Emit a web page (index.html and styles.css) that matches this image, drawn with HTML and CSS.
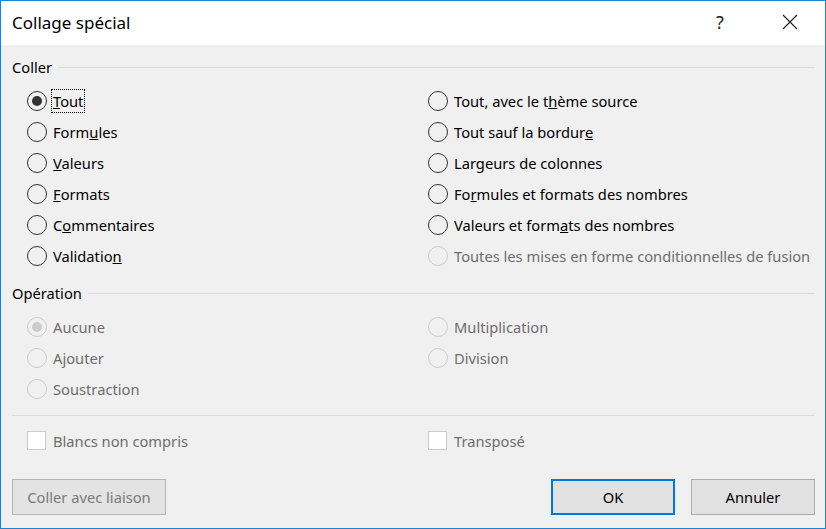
FILE: index.html
```html
<html>
<head>
    <meta charset="utf-8">
    <link rel="stylesheet" href="styles.css">
</head>
<body>
    <div class="dialog">
        <div class="titlebar">
            <span class="title">Collage spécial</span>
            <span class="help">?</span>
            <span class="close">
                <svg width="16" height="16" viewBox="0 0 16 16"><path d="M1 1L15 15M15 1L1 15" stroke="#222" stroke-width="1.2" fill="none"/></svg>
            </span>
        </div>

        <div class="content">
            <div class="group-head"><span>Coller</span><div class="rule"></div></div>
            <div class="options">
                <div class="opt"><span class="radio checked"></span><span class="label focus"><u>T</u>out</span></div>
                <div class="opt"><span class="radio"></span><span class="label">Tout, avec le t<u>h</u>ème source</span></div>
                <div class="opt"><span class="radio"></span><span class="label">Form<u>u</u>les</span></div>
                <div class="opt"><span class="radio"></span><span class="label">Tout sauf la bordur<u>e</u></span></div>
                <div class="opt"><span class="radio"></span><span class="label"><u>V</u>aleurs</span></div>
                <div class="opt"><span class="radio"></span><span class="label">Largeurs de colonnes</span></div>
                <div class="opt"><span class="radio"></span><span class="label"><u>F</u>ormats</span></div>
                <div class="opt"><span class="radio"></span><span class="label">Fo<u>r</u>mules et formats des nombres</span></div>
                <div class="opt"><span class="radio"></span><span class="label">C<u>o</u>mmentaires</span></div>
                <div class="opt"><span class="radio"></span><span class="label">Valeurs et form<u>a</u>ts des nombres</span></div>
                <div class="opt"><span class="radio"></span><span class="label">Validatio<u>n</u></span></div>
                <div class="opt disabled"><span class="radio"></span><span class="label">Toutes les mises en forme conditionnelles de fusion</span></div>
            </div>

            <div class="group-head op-head"><span>Opération</span><div class="rule"></div></div>
            <div class="options">
                <div class="opt disabled"><span class="radio checked"></span><span class="label">Aucune</span></div>
                <div class="opt disabled"><span class="radio"></span><span class="label">Multiplication</span></div>
                <div class="opt disabled"><span class="radio"></span><span class="label">Ajouter</span></div>
                <div class="opt disabled"><span class="radio"></span><span class="label">Division</span></div>
                <div class="opt disabled"><span class="radio"></span><span class="label">Soustraction</span></div>
            </div>

            <div class="separator"></div>

            <div class="options checks">
                <div class="opt disabled"><span class="checkbox"></span><span class="label">Blancs non compris</span></div>
                <div class="opt disabled"><span class="checkbox"></span><span class="label">Transposé</span></div>
            </div>

            <div class="buttons">
                <button class="btn" disabled>Coller avec liaison</button>
                <div class="spacer"></div>
                <button class="btn default">OK</button>
                <button class="btn">Annuler</button>
            </div>
        </div>
    </div>
</body>
</html>
```

FILE: styles.css
```css
body {
    margin: 0;
    font-family: "Noto Sans", "Open Sans", sans-serif;
    font-size: 14.7px;
    color: #000;
}

.dialog {
    width: 824px;
    height: 527px;
    border: 1px solid #1883d7;
    background: #f0f0f0;
    display: flex;
    flex-direction: column;
}

.titlebar {
    height: 44px;
    background: #fff;
    display: flex;
    align-items: center;
    padding-left: 11px;
}

    .titlebar .title {
        font-size: 17px;
        flex: 1;
        margin-top: -2px;
    }

    .titlebar .help {
        font-size: 18px;
        color: #222;
        width: 20px;
        margin-right: 46px;
        margin-top: -2px;
    }

    .titlebar .close {
        width: 16px;
        height: 16px;
        margin-right: 27px;
        margin-top: -2px;
    }

.content {
    padding: 0 10px 0 11px;
}

.group-head {
    display: flex;
    align-items: center;
    height: 22px;
    margin-top: 11px;
}

    .group-head span {
        margin-right: 6px;
    }

    .group-head .rule {
        flex: 1;
        height: 1px;
        background: #dadada;
    }

.options {
    display: grid;
    grid-template-columns: 401px 1fr;
    padding-left: 15px;
    margin-top: 7px;
}

.op-head {
    margin-top: 11px;
}

.opt {
    height: 31px;
    display: flex;
    align-items: center;
}

.radio {
    width: 18px;
    height: 18px;
    border: 1px solid #333;
    border-radius: 50%;
    margin-right: 6px;
    display: flex;
    align-items: center;
    justify-content: center;
}

    .radio.checked::after {
        content: "";
        width: 10px;
        height: 10px;
        border-radius: 50%;
        background: #333;
    }

.checkbox {
    width: 17px;
    height: 17px;
    border: 1px solid #ccc;
    background: #fff;
    margin-right: 7px;
}

.label {
    padding: 1px 1px;
    border: 1px dotted transparent;
    margin-left: -2px;
}

    .label.focus {
        border-color: #000;
    }

.disabled {
    color: #6d6d6d;
}

    .disabled .radio {
        border-color: #ccc;
    }

        .disabled .radio.checked::after {
            background: #ccc;
        }

.separator {
    height: 1px;
    background: #dadada;
    margin-top: 11px;
}

.checks {
    margin-top: 9px;
}

.buttons {
    display: flex;
    margin-top: 23px;
}

    .buttons .spacer {
        flex: 1;
    }

.btn {
    font-family: inherit;
    font-size: 14.7px;
    height: 36px;
    width: 124px;
    background: #e1e1e1;
    border: 1px solid #adadad;
    color: #000;
    margin-left: 16px;
    padding: 0;
}

    .btn:first-child {
        margin-left: 0;
        width: 154px;
    }

    .btn:disabled {
        color: #7a7a7a;
        background: #e3e3e3;
        border-color: #b5b5b5;
    }

    .btn.default {
        border: 2px solid #0078d7;
    }
```
